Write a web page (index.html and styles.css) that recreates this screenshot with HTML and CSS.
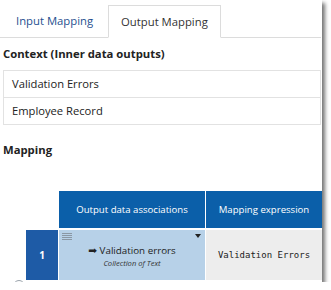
FILE: index.html
```html
<!DOCTYPE html>
<html>
<head>
<meta charset="utf-8">
<link rel="stylesheet" href="styles.css">
</head>
<body>
<div class="frame">
  <div class="tabs">
    <div class="tab">Input Mapping</div>
    <div class="tab active">Output Mapping</div>
    <div class="tab-fill"></div>
  </div>
  <div class="heading context">Context (Inner data outputs)</div>
  <div class="list">
    <div class="item">Validation Errors</div>
    <div class="item">Employee Record</div>
  </div>
  <div class="heading mapping">Mapping</div>
  <div class="grid">
    <div class="spacer head-space"></div>
    <div class="hcell">Output data associations</div>
    <div class="hcell">Mapping expression</div>
    <div class="spacer"></div>
    <div class="num">1</div>
    <div class="assoc">
      <span class="grip"><i></i><i></i><i></i><i></i></span>
      <span class="caret"></span>
      <div class="assoc-name"><span class="arrow">&#x27A1;</span> Validation errors</div>
      <div class="assoc-type">Collection of Text</div>
    </div>
    <div class="expr">Validation Errors</div>
  </div>
  <div class="circle"></div>
</div>
</body>
</html>
```
FILE: styles.css
```css
html, body { margin: 0; padding: 0; background: #fff; }
body { font-family: "Open Sans", "Liberation Sans", sans-serif; color: #222; }
.frame {
  width: 322px; height: 282px; overflow: hidden; background: #fff;
  box-shadow: 3px 3px 4px rgba(0,0,0,0.55);
}
.tabs { display: flex; padding-top: 5px; }
.tab {
  font-size: 11.3px; line-height: 32px; padding: 0 15px 0 16px; white-space: nowrap;
  color: #1f4f8f; border-bottom: 1px solid #dcdcdc;
}
.tab.active {
  color: #333; border: 1px solid #dcdcdc; border-bottom-color: #fff;
  padding: 0 12px 0 12px; line-height: 31px;
}
.tab-fill { flex: 1; border-bottom: 1px solid #dcdcdc; margin-right: 1px; }
.heading { font-weight: bold; font-size: 11.3px; color: #222; padding-left: 3px; line-height: 16px; }
.context { margin-top: 8px; }
.list { margin: 8px 1px 0 3px; border: 1px solid #e2e2e2; }
.item { font-size: 11.2px; line-height: 26px; padding-left: 8px; color: #222; }
.item + .item { border-top: 1px solid #e2e2e2; }
.mapping { margin-top: 17px; }
.grid {
  display: grid; margin-top: 33px;
  grid-template-columns: 25px 32px 146px 116px;
  grid-template-rows: 37px 50px;
  column-gap: 1px; row-gap: 2px;
}
.head-space { grid-column: 1 / 3; }
.hcell {
  background: #0b5fa9; color: #fff; font-size: 9.6px;
  display: flex; align-items: center; justify-content: center; white-space: nowrap;
}
.num {
  background: #1e5ba6; color: #fff; font-size: 10px; font-weight: bold;
  display: flex; align-items: center; justify-content: center;
}
.assoc { background: #b7d1e8; position: relative; text-align: center; padding-top: 14px; box-sizing: border-box; }
.grip { position: absolute; left: 3px; top: 3px; display: flex; flex-direction: column; gap: 1px; }
.grip i { display: block; width: 10px; height: 1px; background: #8a97a4; }
.caret {
  position: absolute; right: 4px; top: 4px; width: 0; height: 0;
  border-left: 3px solid transparent; border-right: 3px solid transparent; border-top: 4px solid #222;
}
.assoc-name { font-size: 9.8px; color: #222; line-height: 12px; white-space: nowrap; }
.arrow { font-family: "DejaVu Sans", sans-serif; font-size: 10.5px; }
.assoc-type { font-size: 7.6px; font-style: italic; color: #333; line-height: 12px; }
.expr {
  background: #ededed; font-family: "DejaVu Sans Mono", "Liberation Mono", monospace;
  font-size: 9px; color: #222; display: flex; align-items: center; justify-content: center;
}
.circle {
  width: 10px; height: 10px; border: 1px solid #9aa3ab; border-radius: 50%;
  margin: 0 0 0 13px;
}
```
